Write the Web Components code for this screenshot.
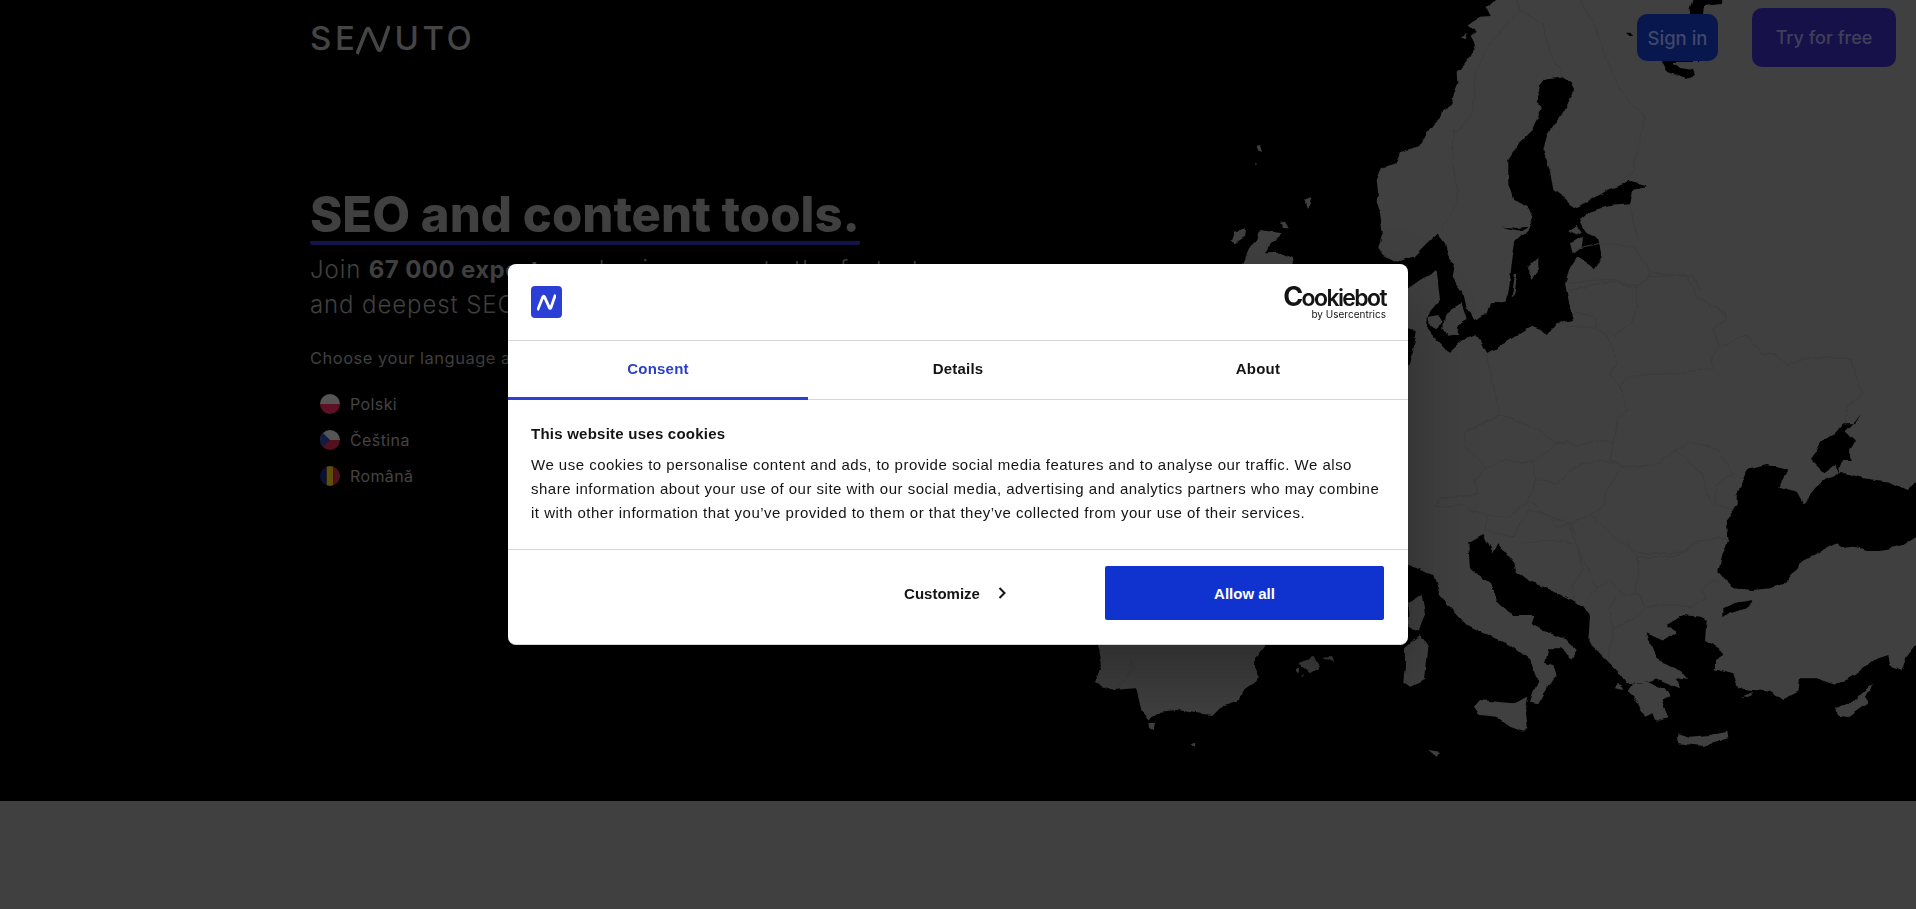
<!DOCTYPE html>
<html lang="en">
<head>
<meta charset="utf-8">
<title>Senuto</title>
<style>
  html, body { margin: 0; height: 100%; background: #000; overflow: hidden; }
  body { font-family: Inter, "Liberation Sans", sans-serif; }
</style>
</head>
<body>
<senuto-page>
  <europe-map slot="map"></europe-map>
  <top-nav slot="nav"></top-nav>
  <hero-copy slot="copy">
    <lang-item code="pl">Polski</lang-item>
    <lang-item code="cz">Čeština</lang-item>
    <lang-item code="ro">Română</lang-item>
  </hero-copy>
</senuto-page>
<cookie-dialog></cookie-dialog>

<script>
// squiggly N used in both the Senuto logo and the consent badge
const nGlyph = 'M1 29 L10.5 5 Q12 2 13.5 5 L22 24 Q23.5 27 25 24 L33 1';

class SenutoPage extends HTMLElement {
  constructor() {
    super();
    this.attachShadow({ mode: 'open' });
    this.shadowRoot.innerHTML = `
    <style>
    :host { display: flex; flex-direction: column; height: 909px; }
    .hero { position: relative; height: 801px; background: #000; overflow: hidden; }
    .content { position: relative; }
    .strip { flex: 1; background: #404040; }
    </style>
    <div class="hero">
      <slot name="map"></slot>
      <div class="content">
        <slot name="nav"></slot>
        <slot name="copy"></slot>
      </div>
    </div>
    <div class="strip"></div>
    `;
  }
}

class TopNav extends HTMLElement {
  constructor() {
    super();
    this.attachShadow({ mode: 'open' });
    this.shadowRoot.innerHTML = `
    <style>
    :host { display: flex; justify-content: space-between; align-items: flex-start; height: 67px; padding: 8px 20px 0 310px; }
    .logo { display: flex; align-items: center; height: 28px; margin-top: 16px; color: #454545; font-size: 33px; line-height: 28px; font-weight: 500; }
    .logo span { letter-spacing: 3.6px; }
    .logo svg { width: 34px; height: 30px; margin: 3px 4px 0 -2px; flex: none; }
    .actions { display: flex; align-items: center; gap: 34px; }
    .btn { display: flex; align-items: center; justify-content: center; box-sizing: border-box; font-weight: 500; border-radius: 10px; }
    .signin { width: 81px; height: 47px; margin-top: 6px; margin-bottom: 6px; background: #09174f; color: #404868; font-size: 18.5px; }
    .free { width: 144px; height: 59px; background: #171149; color: #40405a; font-size: 18px; }
    </style>
    <div class="logo">
      <span>SE</span>
      <svg viewBox="0 0 34 30"><path d="${nGlyph}" fill="none" stroke="#454545" stroke-width="3.6"/></svg>
      <span>UTO</span>
    </div>
    <div class="actions">
      <div class="btn signin">Sign in</div>
      <div class="btn free">Try for free</div>
    </div>
    `;
  }
}

class HeroCopy extends HTMLElement {
  constructor() {
    super();
    this.attachShadow({ mode: 'open' });
    this.shadowRoot.innerHTML = `
    <style>
    :host { display: block; padding: 113px 0 0 310px; color: #404040; }
    h1 { display: inline-block; margin: 0; font-size: 49px; line-height: 53px; font-weight: 800; letter-spacing: 0; border-bottom: 4px solid #11154a; border-radius: 0 0 2px 2px; }
    p { margin: 0; }
    .lead { margin-top: 7px; font-size: 24px; line-height: 35px; font-weight: 300; white-space: nowrap; letter-spacing: 0.9px; }
    .lead b { font-weight: 700; letter-spacing: 0.4px; }
    .choose { margin-top: 24px; font-size: 16.5px; line-height: 24px; font-weight: 400; letter-spacing: .5px; white-space: nowrap; }
    .langs { display: flex; flex-direction: column; gap: 12px; margin-top: 22px; padding-left: 10px; }
    </style>
    <div><h1>SEO and content tools.</h1></div>
    <p class="lead">Join <b>67 000 experts</b> and gain access to the fastest<br>and deepest SEO data</p>
    <p class="choose">Choose your language and</p>
    <div class="langs"><slot></slot></div>
    `;
  }
}

class LangItem extends HTMLElement {
  constructor() {
    super();
    const flags = {
      pl: '<rect width="18" height="9" fill="#555"/><rect y="9" width="18" height="9" fill="#5e1024"/>',
      cz: '<rect width="18" height="9" fill="#555"/><rect y="9" width="18" height="9" fill="#54101e"/><path d="M0 0 L9 9 L0 18Z" fill="#101c40"/>',
      ro: '<rect width="6" height="18" fill="#0a1030"/><rect x="6" width="6" height="18" fill="#5e500c"/><rect x="12" width="6" height="18" fill="#50101c"/>'
    };
    const code = this.getAttribute('code') || 'pl';
    this.attachShadow({ mode: 'open' });
    this.shadowRoot.innerHTML = `
    <style>
    :host { display: flex; align-items: center; gap: 10px; height: 24px; font-size: 16px; font-weight: 400; letter-spacing: .4px; color: #444; }
    svg { width: 20px; height: 20px; border-radius: 50%; flex: none; }
    </style>
    <svg viewBox="0 0 18 18">${flags[code]}</svg>
    <slot></slot>
    `;
  }
}

class EuropeMap extends HTMLElement {
  constructor() {
    super();
    this.attachShadow({ mode: 'open' });

    // outlines were traced from crops, so each run is in its crop's 3x coordinates
    const pts = (ox, oy, list) => {
      const out = [];
      for (let i = 0; i < list.length; i += 2) {
        out.push(`${(ox + list[i] / 3).toFixed(1)} ${(oy + list[i + 1] / 3).toFixed(1)}`);
      }
      return out;
    };
    const closed = (ox, oy, list) => 'M' + pts(ox, oy, list).join('L') + 'Z';
    const open = (ox, oy, list) => 'M' + pts(ox, oy, list).join('L');

    const mainland = [
      '1495 -30',
      ...pts(1200, 0, [885,0, 860,25, 872,48, 840,50, 805,72, 830,95, 812,110, 825,135, 808,172, 785,200, 770,215, 772,250, 755,290, 762,310, 730,330, 725,352, 700,375, 680,402, 665,430, 640,447, 600,460, 585,490, 545,505, 530,540, 534,575, 530,605, 540,640, 548,700, 535,740, 552,765, 590,785, 640,770, 680,730, 712,700, 735,730, 745,770, 762,790, 755,830, 790,880, 800,925, 820,960, 860,940, 870,910, 920,905, 928,860, 935,790, 945,730, 985,690, 1000,650, 985,620, 940,600, 925,550, 925,480, 960,425, 1000,385, 1025,320, 1010,310, 1020,260, 1040,235, 1085,230, 1115,250, 1125,270, 1100,320, 1080,355, 1060,380, 1040,410, 1030,450, 1050,510, 1060,570, 1100,600, 1125,625, 1170,600, 1220,570, 1290,545, 1345,560, 1300,570, 1290,610, 1230,615, 1170,635, 1140,660, 1160,700, 1195,715, 1205,770, 1185,805, 1160,790, 1130,770, 1110,800, 1095,850, 1115,950]),
      ...pts(1400, 260, [520,180, 470,190, 440,228, 422,210, 395,200, 340,235, 260,280, 245,250, 225,225, 190,240, 150,275, 130,262, 105,235, 80,205, 85,160, 120,120, 110,30, 60,60, 25,85, 10,90, 10,200, 25,205, 50,215, 40,270, 25,315, 10,330]),
      ...pts(1400, 500, [10,190, 25,195, 60,205, 100,225, 120,285, 150,320, 200,375, 250,400, 300,420, 345,445, 390,480, 415,545, 400,575, 390,605, 415,610, 430,580, 470,525, 460,495, 435,490, 445,445, 480,445, 515,475, 530,450, 500,420, 440,395, 395,372, 403,345, 340,345, 290,300, 270,250, 210,205, 205,130, 250,105, 265,130, 280,160, 295,130, 340,185, 345,210, 385,240, 440,265, 490,290, 555,325, 570,345, 565,425, 610,470, 655,515, 680,550, 740,545, 770,535, 840,565, 830,535, 865,540, 840,510, 790,490, 770,470, 760,450, 740,400, 790,422, 830,400, 800,375, 850,345, 905,350, 920,358, 915,420, 960,445, 970,465, 945,480, 945,505, 1000,520, 1015,565, 1060,570, 1110,575, 1150,598, 1195,575, 1200,535, 1250,535, 1310,555, 1370,520, 1420,480, 1465,465, 1470,495, 1505,510, 1520,470, 1548,435, 1620,420, 1620,90, 1548,110, 1510,135, 1470,145, 1440,150, 1400,150, 1360,140, 1320,145, 1310,130, 1260,155, 1210,180, 1155,250, 1110,265, 1060,270, 1000,265, 975,240, 955,215, 965,170, 985,120, 980,60, 1010,10]),
      ...pts(1400, 260, [1010,710, 1040,630, 1100,615, 1165,630, 1135,680, 1190,695, 1210,730, 1235,700, 1270,660, 1300,650, 1315,640, 1340,640, 1390,655, 1470,665, 1520,690, 1548,665, 1620,650]),
      '1940 -30'
    ];

    const islands = [
      closed(1200, 0, [170,435, 180,432, 186,455, 175,452]),
      closed(1200, 0, [165,488, 170,488, 168,498]),
      closed(1200, 0, [313,600, 335,590, 322,630, 318,615]),
      closed(1200, 0, [240,668, 255,665, 266,685, 250,685]),
      closed(1200, 0, [95,725, 105,695, 138,685, 135,710, 105,730]),
      closed(1200, 0, [125,800, 150,740, 165,725, 180,690, 248,700, 215,730, 195,760, 240,758, 282,775, 275,800]),
      closed(1200, 0, [985,800, 1015,770, 1015,800, 995,840, 985,820]),
      closed(1200, 0, [935,895, 945,820, 952,820, 942,890]),
      closed(1200, 0, [783,110, 800,98, 795,118]),
      closed(1200, 0, [1105,690, 1130,675, 1145,695, 1125,705]),
      closed(1200, 0, [1110,730, 1150,710, 1145,740, 1118,760]),
      closed(1400, 260, [85,170, 115,165, 130,190, 110,205, 90,195]),
      closed(1400, 260, [135,160, 185,130, 200,180, 170,195, 180,225, 145,230, 130,205]),
      closed(1400, 500, [25,310, 65,285, 75,340, 55,395, 25,380]),
      closed(1400, 500, [15,445, 60,405, 85,445, 75,540, 30,560, 10,545, 15,500]),
      closed(1400, 500, [222,620, 240,600, 290,605, 340,610, 385,590, 375,640, 380,680, 370,695, 330,680, 290,650, 240,645]),
      closed(1400, 500, [835,700, 870,710, 930,705, 985,695, 988,715, 910,738, 835,730]),
      closed(1400, 500, [680,575, 700,550, 745,545, 790,565, 815,585, 785,600, 805,655, 770,665, 760,640, 735,650, 715,610]),
      closed(1400, 500, [1305,625, 1360,605, 1418,550, 1395,590, 1405,605, 1345,648, 1320,645]),
      closed(1400, 500, [85,750, 120,755, 110,770]),
      closed(1400, 500, [645,565, 655,545, 670,570]),
      closed(1400, 500, [1025,590, 1060,575, 1050,590]),
      closed(1080, 630, [45,0, 65,100, 45,160, 100,180, 165,175, 180,235, 205,268, 240,245, 290,240, 350,250, 400,255, 430,225, 480,210, 490,180, 540,145, 525,110, 525,85, 560,40, 560,0]),
      closed(1080, 630, [655,100, 700,80, 720,110, 690,130]),
      closed(1080, 630, [730,80, 755,78, 763,98]),
      closed(1080, 630, [645,120, 660,112, 655,130]),
      closed(1080, 630, [660,135, 672,132, 668,142]),
      closed(1080, 630, [205,280, 225,278, 220,298, 208,298]),
      closed(1080, 630, [335,340, 348,335, 348,350])
    ];

    const seas = [
      // white sea, azov, marmara and the lakes sit on top of the land
      'M1696 -10L1723 -10L1722 4L1704 6L1703 14L1700 62L1673 62L1680 68L1693 70L1695 75L1687 79L1667 72L1662 62L1680 40Z',
      closed(1200, 0, [1275,95, 1290,95, 1300,105, 1285,105]),
      closed(1400, 260, [1385,465, 1365,490, 1330,490, 1300,525, 1260,545, 1230,600, 1270,640, 1310,610, 1315,640, 1325,600, 1355,600, 1350,570, 1365,545, 1335,515]),
      closed(1400, 500, [970,325, 1000,310, 1060,300, 1040,325, 990,340, 970,355]),
      closed(1200, 0, [905,680, 950,684, 985,680, 965,692, 925,686])
    ];

    const borders = [
      open(1400, 260, [260,285, 270,340, 285,400, 300,465, 190,520, 195,560, 260,625, 320,600, 395,610, 470,550, 400,500, 300,465]),
      open(1400, 260, [470,550, 500,545, 530,560, 590,540, 640,550, 650,480, 685,450, 660,380, 630,340, 650,310, 630,240, 590,205, 470,190]),
      open(1400, 260, [590,205, 585,170, 520,155]),
      open(1400, 260, [510,90, 640,65, 710,85, 710,140, 695,190, 640,225, 620,215]),
      open(1400, 260, [710,85, 750,50, 860,45, 890,110, 975,160, 980,180, 935,205, 960,260, 935,290, 940,325, 870,335, 680,350, 660,380]),
      open(1400, 260, [960,260, 1040,225, 1080,280, 1130,285, 1160,315, 1230,295, 1355,295, 1365,340, 1390,400, 1340,440, 1335,490]),
      open(1400, 260, [640,550, 630,600, 670,620, 760,615, 830,570, 870,545, 945,565, 1000,640, 950,670, 945,735, 1000,750]),
      open(1400, 260, [830,570, 905,640, 930,720, 945,735]),
      open(1400, 260, [670,620, 620,690, 610,740, 570,765, 640,830, 720,880, 850,880, 900,840, 985,835]),
      open(1400, 260, [400,610, 410,660, 470,670, 530,620, 600,600, 640,610]),
      open(1400, 260, [410,660, 385,720, 470,800, 510,790, 570,765]),
      open(1400, 260, [260,625, 225,660, 235,705, 120,715, 110,740, 190,735, 260,770, 320,770, 385,730]),
      open(1400, 260, [260,770, 255,810, 340,830, 385,750, 510,790, 530,830]),
      open(1400, 500, [365,130, 400,125, 495,125, 530,135, 550,210, 515,260, 520,300]),
      open(1400, 500, [510,80, 530,135, 550,180, 590,265, 630,240, 670,285, 710,280, 740,320, 700,360, 640,385, 625,330, 650,290]),
      open(1400, 500, [680,125, 710,170, 720,215, 705,270, 740,320, 800,315, 880,320, 915,295, 905,270, 940,240, 965,250]),
      open(1400, 500, [710,175, 840,165, 890,120, 985,120]),
      open(1400, 500, [590,265, 565,290]),
      open(1400, 500, [640,385, 625,480]),
      open(1080, 630, [150,85, 160,115, 125,160, 105,175]),
      open(1200, 0, [1085,225, 1050,150, 1025,70, 960,30, 950,0]),
      open(1200, 0, [960,30, 870,130, 830,210, 815,350, 760,400, 755,470, 770,560, 775,600, 750,650, 720,690]),
      open(1200, 0, [1140,0, 1195,100, 1235,220, 1280,300, 1335,350, 1300,510, 1255,555]),
      open(1200, 0, [1290,610, 1310,720]),
      open(1200, 0, [1130,745, 1200,730, 1300,740, 1355,820]),
      open(1200, 0, [1095,850, 1240,840, 1320,860, 1355,820, 1480,830, 1500,870])
    ];

    this.shadowRoot.innerHTML = `
    <style>
    :host { position: absolute; left: 0; top: 0; display: block; width: 1916px; height: 801px; }
    svg { display: block; }
    </style>
    <svg width="1916" height="801" viewBox="0 0 1916 801">
      <defs>
        <filter id="rough" filterUnits="userSpaceOnUse" x="0" y="0" width="1916" height="801">
          <feTurbulence type="fractalNoise" baseFrequency="0.09" numOctaves="2" seed="4"/>
          <feDisplacementMap in="SourceGraphic" scale="5" xChannelSelector="R" yChannelSelector="G"/>
        </filter>
      </defs>
      <g filter="url(#rough)">
        <path fill="#404040" d="M${mainland.join('L')}Z"/>
        ${islands.map(d => `<path fill="#404040" d="${d}"/>`).join('')}
        ${seas.map(d => `<path fill="#000" d="${d}"/>`).join('')}
        <path fill="none" stroke="#3a3a3a" stroke-width="1" d="${borders.join(' ')}"/>
      </g>
    </svg>
    `;
  }
}

class CookieDialog extends HTMLElement {
  constructor() {
    super();
    this.attachShadow({ mode: 'open' });
    this.shadowRoot.innerHTML = `
    <style>
    :host { position: fixed; inset: 0; display: flex; align-items: center; justify-content: center; font-family: "Liberation Sans", Arial, sans-serif; color: #141414; }
    .dialog { display: flex; flex-direction: column; box-sizing: border-box; width: 900px; height: 381px; background: #fff; border-radius: 8px; border-bottom: 1px solid #d6d6d6; box-shadow: 0 32px 68px rgba(0,0,0,.3); overflow: hidden; }
    header { display: flex; align-items: flex-start; justify-content: space-between; box-sizing: border-box; height: 77px; padding: 22px 22px 0 23px; border-bottom: 1px solid #d6d6d6; }
    .badge { display: flex; align-items: center; justify-content: center; width: 31px; height: 32px; background: #2b3fd6; border-radius: 4px; }
    .badge svg { width: 19px; height: 17px; }
    .brand { display: flex; flex-direction: column; align-items: flex-end; font-family: Inter, sans-serif; }
    .brand .name { font-size: 23px; line-height: 21px; font-weight: 600; letter-spacing: -1.6px; }
    .brand .name i { font-style: normal; font-size: 27px; font-weight: 700; }
    .brand .by { font-size: 10px; line-height: 11px; }
    nav { display: flex; height: 58px; border-bottom: 1px solid #d6d6d6; box-sizing: content-box; }
    .tab { flex: 1; display: flex; align-items: center; justify-content: center; box-sizing: border-box; padding-bottom: 2px; border-bottom: 3px solid transparent; margin-bottom: -1px; font-size: 15px; font-weight: 700; letter-spacing: .2px; }
    .tab.on { color: #2b3fc7; border-bottom-color: #2b3fd6; }
    .body { flex: 1; padding: 22px 23px 0; }
    h2 { margin: 0 0 7px; font-size: 15px; line-height: 24px; font-weight: 700; letter-spacing: .24px; }
    p { margin: 0; font-size: 15px; line-height: 24px; letter-spacing: .49px; white-space: nowrap; }
    footer { display: flex; align-items: center; height: 95px; box-sizing: border-box; padding: 0 24px 8px 0; border-top: 1px solid #d6d6d6; }
    .customize { flex: 1; display: flex; align-items: center; justify-content: center; gap: 18px; margin-left: 297px; font-size: 15px; font-weight: 700; }
    .customize svg { width: 8px; height: 12px; }
    .allow { display: flex; align-items: center; justify-content: center; width: 279px; height: 54px; background: #1032cf; color: #fff; border-radius: 2px; font-size: 15px; font-weight: 700; }
    </style>
    <div class="dialog">
      <header>
        <div class="badge"><svg viewBox="0 0 34 30"><path d="${nGlyph}" fill="none" stroke="#fff" stroke-width="5"/></svg></div>
        <div class="brand"><span class="name"><i>C</i>ookiebot</span><span class="by">by Usercentrics</span></div>
      </header>
      <nav>
        <div class="tab on">Consent</div>
        <div class="tab">Details</div>
        <div class="tab">About</div>
      </nav>
      <div class="body">
        <h2>This website uses cookies</h2>
        <p>We use cookies to personalise content and ads, to provide social media features and to analyse our traffic. We also<br>share information about your use of our site with our social media, advertising and analytics partners who may combine<br>it with other information that you’ve provided to them or that they’ve collected from your use of their services.</p>
      </div>
      <footer>
        <div class="customize">Customize <svg viewBox="0 0 8 12"><path d="M1.5 1 L6.5 6 L1.5 11" fill="none" stroke="#141414" stroke-width="2"/></svg></div>
        <div class="allow">Allow all</div>
      </footer>
    </div>
    `;
  }
}

customElements.define('senuto-page', SenutoPage);
customElements.define('top-nav', TopNav);
customElements.define('hero-copy', HeroCopy);
customElements.define('lang-item', LangItem);
customElements.define('europe-map', EuropeMap);
customElements.define('cookie-dialog', CookieDialog);
</script>
</body>
</html>
